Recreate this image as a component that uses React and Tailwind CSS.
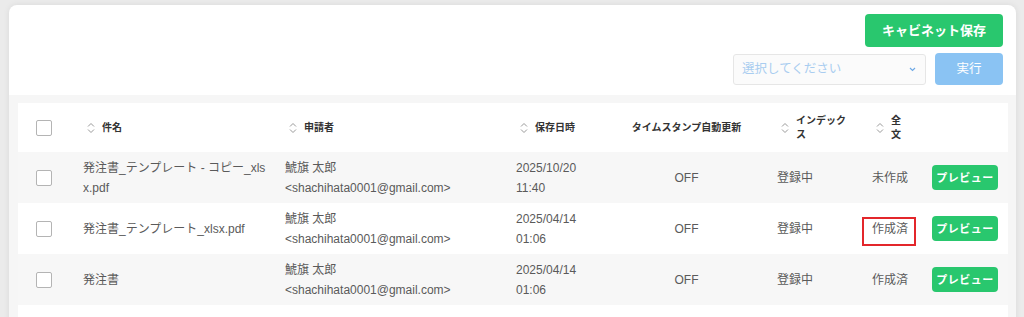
import React from 'react'

const rows = [
    {
        name: '発注書_テンプレート - コピー_xlsx.pdf',
        date: '2025/10/20',
        time: '11:40',
        fulltext: '未作成',
    },
    {
        name: '発注書_テンプレート_xlsx.pdf',
        date: '2025/04/14',
        time: '01:06',
        fulltext: '作成済',
        marked: true,
    },
    {
        name: '発注書',
        date: '2025/04/14',
        time: '01:06',
        fulltext: '作成済',
    },
]

const SortIcon = () => (
    <svg width="8" height="14" viewBox="0 0 8 14" className="shrink-0">
        <path d="M1 5.5 L4 2.5 L7 5.5" fill="none" stroke="#9a9a9a" strokeWidth="1" />
        <path d="M1 8.5 L4 11.5 L7 8.5" fill="none" stroke="#9a9a9a" strokeWidth="1" />
    </svg>
)

const Checkbox = () => (
    <span className="block w-[16px] h-[16px] border border-[#b4b4b4] rounded-[2px] bg-white" />
)

const SortHeader = ({ children }) => (
    <th className="px-[14px] text-left font-bold align-middle">
        <div className="flex items-center gap-[7px]">
            <SortIcon />
            <span>{children}</span>
        </div>
    </th>
)

export default function App() {
    return (
        <div className="h-[317px] overflow-hidden bg-[#ebebeb] pt-[5px] pl-[9px] pr-[8px] font-['Liberation_Sans','Noto_Sans_CJK_JP',sans-serif]">
            <div className="bg-white rounded-[8px] shadow-[0_0_6px_rgba(0,0,0,0.08)] overflow-hidden">
                {/* Actions */}
                <div className="flex flex-col items-end gap-[6px] pt-[9px] pr-[13px] pb-[10px]">
                    <button className="w-[138px] h-[33px] rounded-[4px] bg-[#29c76e] text-white text-[13px] font-bold">
                        キャビネット保存
                    </button>
                    <div className="flex items-center gap-[9px]">
                        <div className="w-[193px] h-[31px] flex items-center justify-between pl-[8px] pr-[9px] border border-[#e6e6e6] rounded-[3px] bg-[#fbfbfb]">
                            <span className="text-[12.5px] text-[#a9cdf0]">選択してください</span>
                            <svg width="7" height="5" viewBox="0 0 7 5">
                                <path d="M1 1 L3.5 3.5 L6 1" fill="none" stroke="#6ea9e6" strokeWidth="1.2" />
                            </svg>
                        </div>
                        <button className="w-[68px] h-[32px] rounded-[4px] bg-[#8ac3f3] text-white text-[12.5px]">
                            実行
                        </button>
                    </div>
                </div>

                {/* Table */}
                <div className="bg-[#f6f6f6] pt-[8px] pl-[9px] pr-[8px]">
                    <table className="w-[990px] table-fixed border-collapse bg-white text-[12px] text-[#5a5a5a]">
                        <colgroup>
                            <col className="w-[55px]" />
                            <col className="w-[202px]" />
                            <col className="w-[231px]" />
                            <col className="w-[100px]" />
                            <col className="w-[161px]" />
                            <col className="w-[95px]" />
                            <col className="w-[60px]" />
                            <col className="w-[86px]" />
                        </colgroup>
                        <thead>
                            <tr className="h-[49px] text-[10px] text-[#333] leading-[14px]">
                                <th className="pl-[18px] align-middle">
                                    <Checkbox />
                                </th>
                                <SortHeader>件名</SortHeader>
                                <SortHeader>申請者</SortHeader>
                                <SortHeader>保存日時</SortHeader>
                                <th className="text-center font-bold align-middle">タイムスタンプ自動更新</th>
                                <SortHeader>
                                    インデック
                                    <br />ス
                                </SortHeader>
                                <SortHeader>
                                    全
                                    <br />文
                                </SortHeader>
                                <th />
                            </tr>
                        </thead>
                        <tbody className="leading-[20px]">
                            {rows.map((r, i) => (
                                <tr key={i} className={`h-[51px] ${i % 2 === 0 ? 'bg-[#f7f7f7]' : 'bg-white'}`}>
                                    <td className="pl-[18px] align-middle">
                                        <Checkbox />
                                    </td>
                                    <td className="pl-[10px] pr-[4px] align-middle break-all">{r.name}</td>
                                    <td className="px-[10px] align-middle">
                                        <div>鯱旗 太郎</div>
                                        <div>&lt;shachihata0001@gmail.com&gt;</div>
                                    </td>
                                    <td className="px-[10px] align-middle">
                                        <div>{r.date}</div>
                                        <div>{r.time}</div>
                                    </td>
                                    <td className="text-center align-middle">OFF</td>
                                    <td className="px-[10px] align-middle">登録中</td>
                                    <td className="px-[10px] align-middle">
                                        <span className="relative">
                                            {r.fulltext}
                                            {r.marked && (
                                                <span className="absolute -left-[10px] -top-[5px] w-[54px] h-[29px] border-2 border-[#e3262b]" />
                                            )}
                                        </span>
                                    </td>
                                    <td className="px-[10px] align-middle">
                                        <button className="w-[66px] h-[25px] rounded-[4px] bg-[#29c76e] text-white text-[11px] font-bold tracking-[0.5px]">
                                            プレビュー
                                        </button>
                                    </td>
                                </tr>
                            ))}
                        </tbody>
                    </table>
                    <div className="h-[20px] bg-white" />
                </div>
            </div>
        </div>
    )
}
